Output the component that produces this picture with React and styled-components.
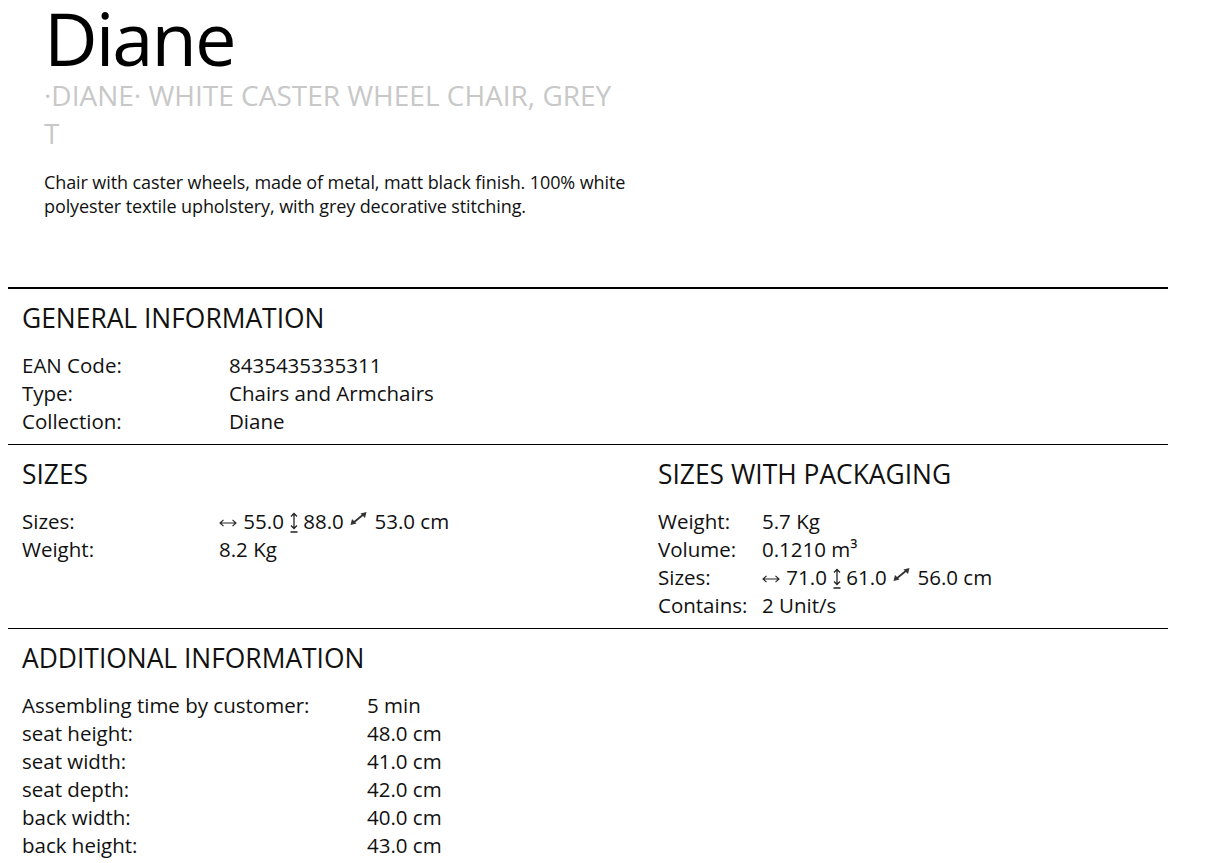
import React from "react";
import styled, { createGlobalStyle } from "styled-components";

const Global = createGlobalStyle`
  html, body { margin: 0; padding: 0; background: #fff; }
  body { font-family: "Open Sans", "DejaVu Sans", sans-serif; color: #111; }
`;

const Page = styled.div`
  width: 1160px;
  padding: 0 8px;
`;

const Header = styled.header`
  padding: 0 0 0 36px;
  height: 287px;
  box-sizing: border-box;
`;

const Title = styled.h1`
  margin: 0;
  font-size: 74px;
  line-height: 76px;
  letter-spacing: -2px;
  font-weight: 400;
  color: #000;
`;

const Subtitle = styled.h2`
  margin: 0;
  width: 575px;
  font-size: 28px;
  line-height: 38px;
  font-weight: 400;
  color: #c8c8c8;
`;

const Description = styled.p`
  margin: 18px 0 0;
  width: 600px;
  font-size: 18px;
  line-height: 24px;
  letter-spacing: -0.1px;
  color: #111;
`;

const Section = styled.section`
  border-top: ${(p) => (p.$thick ? "2px" : "1px")} solid #000;
  padding: 7px 14px 9px;
`;

const Columns = styled.div`
  display: grid;
  grid-template-columns: 636px 1fr;
`;

const Heading = styled.h3`
  margin: 0 0 11px;
  font-size: 26.4px;
  line-height: 44px;
  font-weight: 400;
  color: #111;
`;

const Table = styled.div`
  display: grid;
  grid-template-columns: ${(p) => p.$label}px 1fr;
  grid-auto-rows: 28px;
  font-size: 20.5px;
  line-height: 28px;
  color: #111;
`;

const Label = styled.div``;
const Value = styled.div`
  white-space: nowrap;
`;

const Icon = styled.svg`
  display: inline-block;
  vertical-align: ${(p) => p.$va}px;
  margin: 0 ${(p) => p.$mr || 0}px 0 ${(p) => p.$ml || 0}px;
  overflow: visible;
`;

const WidthIcon = () => (
  <Icon width="18" height="8" viewBox="0 0 18 8" $va={2} $mr={1}>
    <path d="M1 4H17M4.5 0.8L1 4L4.5 7.2M13.5 0.8L17 4L13.5 7.2" fill="none" stroke="#222" strokeWidth="1.1" />
  </Icon>
);

const HeightIcon = () => (
  <Icon width="8" height="21" viewBox="0 0 8 21" $va={-4} $ml={1} $mr={5}>
    <path d="M4 1.5V16.5M1 4.5L4 1.5L7 4.5M1 13.5L4 16.5L7 13.5M0.5 20H7.5" fill="none" stroke="#222" strokeWidth="1.3" />
  </Icon>
);

const DepthIcon = () => (
  <Icon width="17" height="15" viewBox="0 0 17 15" $va={3} $ml={1} $mr={2}>
    <path d="M3 12L14 3" stroke="#333" strokeWidth="1.8" />
    <path d="M16.5 1L10.5 2.5L15 7Z" fill="#333" />
    <path d="M0.5 14L6.5 12.5L2 8Z" fill="#333" />
  </Icon>
);

const Dims = ({ w, h, d }) => (
  <>
    <WidthIcon /> {w} <HeightIcon />{h} <DepthIcon /> {d} cm
  </>
);

const Rows = ({ label, rows }) => (
  <Table $label={label}>
    {rows.map(([l, v], i) => (
      <React.Fragment key={i}>
        <Label>{l}</Label>
        <Value>{v}</Value>
      </React.Fragment>
    ))}
  </Table>
);

export default function App() {
  return (
    <Page>
      <Global />
      <Header>
        <Title>Diane</Title>
        <Subtitle>·DIANE· WHITE CASTER WHEEL CHAIR, GREY T</Subtitle>
        <Description>
          Chair with caster wheels, made of metal, matt black finish. 100% white
          polyester textile upholstery, with grey decorative stitching.
        </Description>
      </Header>
      <Section $thick>
        <Heading>GENERAL INFORMATION</Heading>
        <Rows
          label={207}
          rows={[
            ["EAN Code:", "8435435335311"],
            ["Type:", "Chairs and Armchairs"],
            ["Collection:", "Diane"],
          ]}
        />
      </Section>
      <Section>
        <Columns>
          <div>
            <Heading>SIZES</Heading>
            <Rows
              label={197}
              rows={[
                ["Sizes:", <Dims w="55.0" h="88.0" d="53.0" />],
                ["Weight:", "8.2 Kg"],
              ]}
            />
          </div>
          <div>
            <Heading>SIZES WITH PACKAGING</Heading>
            <Rows
              label={104}
              rows={[
                ["Weight:", "5.7 Kg"],
                ["Volume:", "0.1210 m³"],
                ["Sizes:", <Dims w="71.0" h="61.0" d="56.0" />],
                ["Contains:", "2 Unit/s"],
              ]}
            />
          </div>
        </Columns>
      </Section>
      <Section>
        <Heading>ADDITIONAL INFORMATION</Heading>
        <Rows
          label={345}
          rows={[
            ["Assembling time by customer:", "5 min"],
            ["seat height:", "48.0 cm"],
            ["seat width:", "41.0 cm"],
            ["seat depth:", "42.0 cm"],
            ["back width:", "40.0 cm"],
            ["back height:", "43.0 cm"],
          ]}
        />
      </Section>
    </Page>
  );
}
